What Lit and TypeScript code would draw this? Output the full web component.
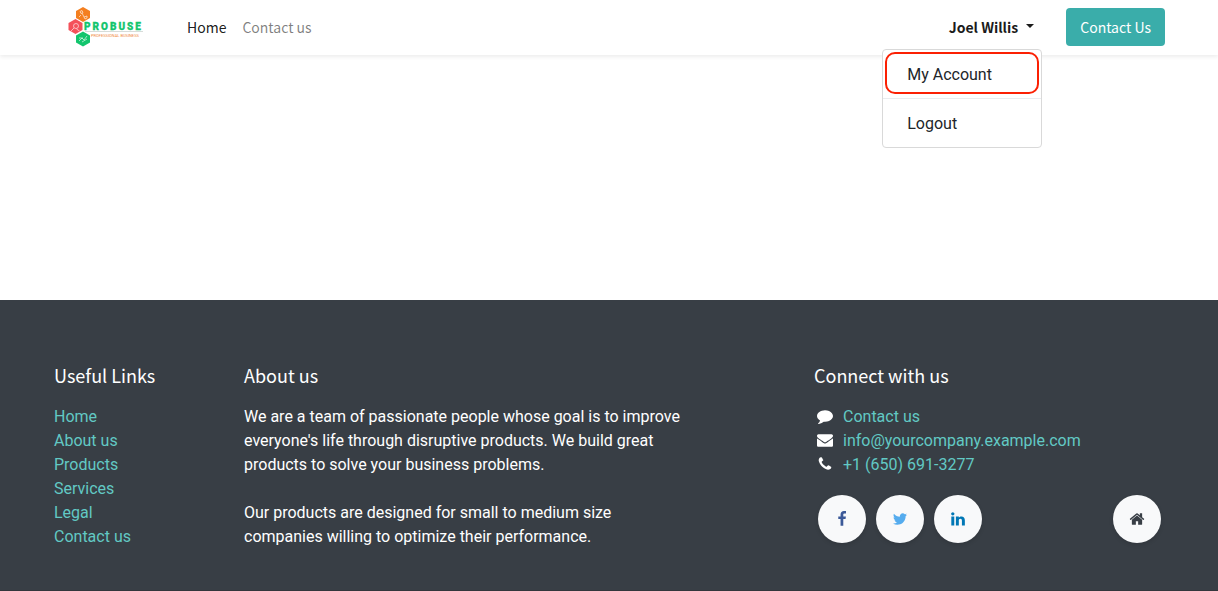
import { LitElement, html, css, svg } from "lit";
import { customElement, property, state } from "lit/decorators.js";

const ICONS: Record<string, string> = {
  comment:
    "M1792 896q0 174-120 321.5t-326 233-450 85.5q-70 0-145-8-198 175-460 242-49 14-114 22-17 2-30.5-9t-17.5-29v-1q-3-4-.5-12t2-10 4.5-9.5l6-9 7-8.5 8-9q7-8 31-34.5t34.5-38 31-39.5 32.5-51 27-59 26-76q-157-89-247.5-220t-90.5-281q0-130 71-248.5t191-204.5 286-136.5 348-50.5q244 0 450 85.5t326 233 120 321.5z",
  envelope:
    "M1792 710v794q0 66-47 113t-113 47h-1472q-66 0-113-47t-47-113v-794q44 49 101 87 362 246 497 345 57 42 92.5 65.5t94.5 48 110 24.5h2q51 0 110-24.5t94.5-48 92.5-65.5q170-123 498-345 57-39 100-87zm0-294q0 79-49 151t-122 123q-376 261-468 325-10 7-42.5 31t-54 38.5-52 32.5-57.5 27-50 9h-2q-23 0-50-9t-57.5-27-52-32.5-54-38.5-42.5-31q-91-64-262-182.5t-205-142.5q-62-42-117-115.5t-55-136.5q0-78 41.5-130t118.5-52h1472q65 0 112.5 47t47.5 113z",
  phone:
    "M1600 1240q0 27-10 70.5t-21 68.5q-21 50-122 106-94 51-186 51-27 0-53-3.5t-57.5-12.5-47-14.5-55.5-20.5-49-18q-98-35-175-83-127-79-264-216t-216-264q-48-77-83-175-3-9-18-49t-20.5-55.5-14.5-47-12.5-57.5-3.5-53q0-92 51-186 56-101 106-122 25-11 68.5-21t70.5-10q14 0 21 3 18 6 53 76 11 19 30 54t35 63.5 31 53.5q3 4 17.5 25t21.5 35.5 7 28.5q0 20-28.5 50t-62 55-62 53-28.5 46q0 9 5 22.5t8.5 20.5 14 24 11.5 19q76 137 174 235t235 174q2 1 19 11.5t24 14 20.5 8.5 22.5 5q18 0 46-28.5t53-62 55-62 50-28.5q14 0 28.5 7t35.5 21.5 25 17.5q25 15 53.5 31t63.5 35 54 30q70 35 76 53 3 7 3 21z",
  facebook:
    "M1343 12v264h-157q-86 0-116 36t-30 108v189h293l-39 296h-254v759h-306v-759h-255v-296h255v-218q0-186 104-288.5t277-102.5q147 0 228 12z",
  twitter:
    "M1684 408q-67 98-162 167 1 14 1 42 0 130-38 259.5t-115.5 248.5-184.5 210.5-258 146-323 54.5q-271 0-496-145 35 4 78 4 225 0 401-138-105-2-188-64.5t-114-159.5q33 5 61 5 43 0 85-11-112-23-185.5-111.5t-73.5-205.5v-4q68 38 146 41-66-44-105-115t-39-154q0-88 44-163 121 149 294.5 238.5t371.5 99.5q-8-38-8-74 0-134 94.5-228.5t228.5-94.5q140 0 236 102 109-21 205-78-37 115-142 178 93-10 186-50z",
  linkedin:
    "M477 625v991h-330v-991h330zm21-306q1 73-50.5 122t-135.5 49h-2q-82 0-132-49t-50-122q0-74 51.5-122.5t134.5-48.5 133 48.5 51 122.5zm1166 729v568h-329v-530q0-105-40.5-164.5t-126.5-59.5q-63 0-105.5 34.5t-63.5 85.5q-11 30-11 81v553h-329q2-399 2-647t-1-296l-1-48h329v144h-2q20-32 41-56t56.5-52 87-43.5 114.5-15.5q171 0 275 113.5t104 332.5z",
  home:
    "M1472 992v480q0 26-19 45t-45 19h-384v-384h-256v384h-384q-26 0-45-19t-19-45v-480q0-1 .5-3t.5-3l575-474 575 474q1 2 1 6zm223-69l-62 74q-8 9-21 11h-3q-13 0-21-7l-692-577-692 577q-12 8-24 7-13-2-21-11l-62-74q-8-10-7-23.5t11-21.5l719-599q32-26 76-26t76 26l244 204v-195q0-14 9-23t23-9h192q14 0 23 9t9 23v408l219 182q10 8 11 21.5t-7 23.5z",
};

@customElement("fa-icon")
class FaIcon extends LitElement {
  @property() name = "home";
  static styles = css`
    :host { display: inline-flex; }
    .glyph { width: 16px; height: 16px; fill: currentColor; display: block; }
  `;
  render() {
    return html`<svg class="glyph" viewBox="0 0 1792 1792" aria-hidden="true">
      ${svg`<path d=${ICONS[this.name]}></path>`}
    </svg>`;
  }
}

@customElement("brand-logo")
class BrandLogo extends LitElement {
  static styles = css`
    :host { display: block; }
    .logo { display: block; width: 76px; height: 40px; overflow: visible; }
    .word { font: 900 10px Roboto, sans-serif; letter-spacing: 2px; fill: #12c56d; stroke: #12c56d; stroke-width: 0.3; }
    .tag { font: 400 4px Roboto, sans-serif; fill: #f08a3c; }
    .line { fill: none; stroke: #fff; stroke-width: 0.8; opacity: 0.75; }
  `;
  render() {
    return html`<svg class="logo" viewBox="0 0 76 40" role="img" aria-label="Probuse">
      <path fill="#f47f20" d="M15 0l7 4v7l-7 4-7-4V4z" />
      <path fill="#f4515a" d="M7.500 12l7 4v7l-7 4-7-4v-7z" />
      <path fill="#12c56d" d="M15 24.500l7 4v7l-7 4-7-4v-7z" />
      <path class="line" d="M12 4.500l2-1 1 2-2 1zM14 6l2 4M16 10l3-1v2l-2 1zM11 10l2-2" />
      <path class="line" d="M8 16.500a2.500 2.500 0 1 1 0 5a2.500 2.500 0 1 1 0-5M6 21l-3 3M8.500 22l3 2" />
      <path class="line" d="M11 34l3-3 2 2 3-4M11 31h4M14 35l5-3" />
      <text class="word" x="16" y="23">PROBUSE</text>
      <path d="M17 24.500h58" stroke="#bcc4c0" stroke-width="0.6" />
      <text class="tag" x="23" y="30">PROFESSIONAL BUSINESS</text>
    </svg>`;
  }
}

@customElement("site-header")
class SiteHeader extends LitElement {
  @state() private open = true;
  static styles = css`
    :host {
      display: block; position: relative; z-index: 1; background: #fff;
      box-shadow: 0 2px 4px rgba(0, 0, 0, 0.075);
      font: 14px/24px "Noto Sans CJK JP", "Noto Sans", sans-serif;
    }
    .bar {
      box-sizing: border-box; max-width: 1140px; min-height: 55px; margin: 0 auto;
      padding: 0 14px 1px 29px; display: flex; align-items: center;
    }
    .brand { margin-right: 43px; }
    .nav { display: flex; gap: 16px; flex: 1; }
    .link { color: rgba(0, 0, 0, 0.5); text-decoration: none; }
    .active { color: rgba(0, 0, 0, 0.9); }
    .account { position: relative; margin-right: 24px; }
    .toggle {
      display: flex; align-items: center; gap: 8px; border: 0; background: none;
      padding: 8px; font: inherit; font-weight: 700; color: #1b1b1b; cursor: pointer;
    }
    .caret { border: 4px solid transparent; border-top-color: currentColor; border-bottom: 0; margin-bottom: 3px; }
    .menu {
      position: absolute; right: 0; top: 100%; box-sizing: border-box; width: 160px;
      margin-top: 2px; padding: 8px 0; background: #fff; border: 1px solid #d9d9d9; border-radius: 4px;
      font: 16px/24px Roboto, sans-serif;
    }
    .item { display: block; padding: 5px 24px 3px; color: #212529; text-decoration: none; }
    .rule { height: 1px; margin: 8px 0; background: #e9ecef; }
    .ring {
      position: absolute; inset: 2px 2px auto; height: 38px;
      border: 2px solid #fb2003; border-radius: 10px; pointer-events: none;
    }
    .cta {
      padding: 7px 14px; background: #3aadaa; color: #fff; border-radius: 4px; text-decoration: none;
    }
  `;
  render() {
    return html`<header class="bar">
      <a class="brand" href="#"><brand-logo></brand-logo></a>
      <nav class="nav">
        <a class="link active" href="#">Home</a>
        <a class="link" href="#contact">Contact us</a>
      </nav>
      <div class="account">
        <button class="toggle" aria-expanded=${this.open} @click=${() => (this.open = !this.open)}>
          <span>Joel Willis</span><span class="caret"></span>
        </button>
        ${this.open
          ? html`<div class="menu">
              <a class="item" href="#account">My Account</a>
              <div class="rule"></div>
              <a class="item" href="#logout">Logout</a>
              <div class="ring"></div>
            </div>`
          : null}
      </div>
      <a class="cta" href="#contact">Contact Us</a>
    </header>`;
  }
}

@customElement("site-footer")
class SiteFooter extends LitElement {
  static styles = css`
    :host {
      display: block; background: #383e45; color: #fff;
      font: 16px/24px Roboto, sans-serif; border-bottom: 1px solid #33363c;
    }
    .grid {
      box-sizing: border-box; max-width: 1140px; margin: 0 auto; padding: 63px 0 41px;
      display: grid; grid-template-columns: 2fr 5fr 1fr 4fr;
    }
    .col { padding: 0 15px; min-width: 0; }
    .connect { grid-column: 4; }
    .title {
      margin: 0 0 18px; font: 400 18px/24px "Noto Sans CJK JP", "Noto Sans", sans-serif;
    }
    .list { list-style: none; margin: 0; padding: 0; }
    .link { color: #62c9c4; text-decoration: none; }
    .text { margin: 0 0 24px; }
    .text:last-child { margin: 0; }
    .row { display: flex; align-items: center; }
    .mark { width: 21px; height: 18px; margin-right: 8px; justify-content: center; }
    .social { display: flex; gap: 10px; padding: 18px 3px 0 4px; }
    .round {
      width: 48px; height: 48px; border-radius: 50%; background: #f8f9fa;
      display: flex; align-items: center; justify-content: center;
      box-shadow: 0 2px 4px rgba(0, 0, 0, 0.12);
    }
    .facebook { color: #3b5998; }
    .twitter { color: #55acee; }
    .linkedin { color: #0077b5; }
    .home { color: #383e45; margin-left: auto; }
  `;
  render() {
    const links = ["Home", "About us", "Products", "Services", "Legal", "Contact us"];
    const contacts = [
      ["comment", "Contact us", "#contact"],
      ["envelope", "info@yourcompany.example.com", "mailto:info@yourcompany.example.com"],
      ["phone", "+1 (650) 691-3277", "tel:+16506913277"],
    ];
    return html`<footer class="grid">
      <section class="col">
        <h5 class="title">Useful Links</h5>
        <ul class="list">
          ${links.map((l) => html`<li><a class="link" href="#">${l}</a></li>`)}
        </ul>
      </section>
      <section class="col">
        <h5 class="title">About us</h5>
        <p class="text">We are a team of passionate people whose goal is to improve everyone's life through disruptive products. We build great products to solve your business problems.</p>
        <p class="text">Our products are designed for small to medium size companies willing to optimize their performance.</p>
      </section>
      <section class="col connect">
        <h5 class="title">Connect with us</h5>
        <ul class="list">
          ${contacts.map(
            ([icon, label, href]) => html`<li class="row">
              <fa-icon class="mark" name=${icon}></fa-icon><a class="link" href=${href}>${label}</a>
            </li>`
          )}
        </ul>
        <div class="social">
          ${["facebook", "twitter", "linkedin", "home"].map(
            (n) => html`<a class="round ${n}" href="#" aria-label=${n}><fa-icon name=${n}></fa-icon></a>`
          )}
        </div>
      </section>
    </footer>`;
  }
}

@customElement("app-root")
class AppRoot extends LitElement {
  static styles = css`
    :host { display: flex; flex-direction: column; min-height: 100vh; background: #fff; }
    .content { flex: 1; }
  `;
  render() {
    return html`<site-header></site-header>
      <main class="content"></main>
      <site-footer></site-footer>`;
  }
}
